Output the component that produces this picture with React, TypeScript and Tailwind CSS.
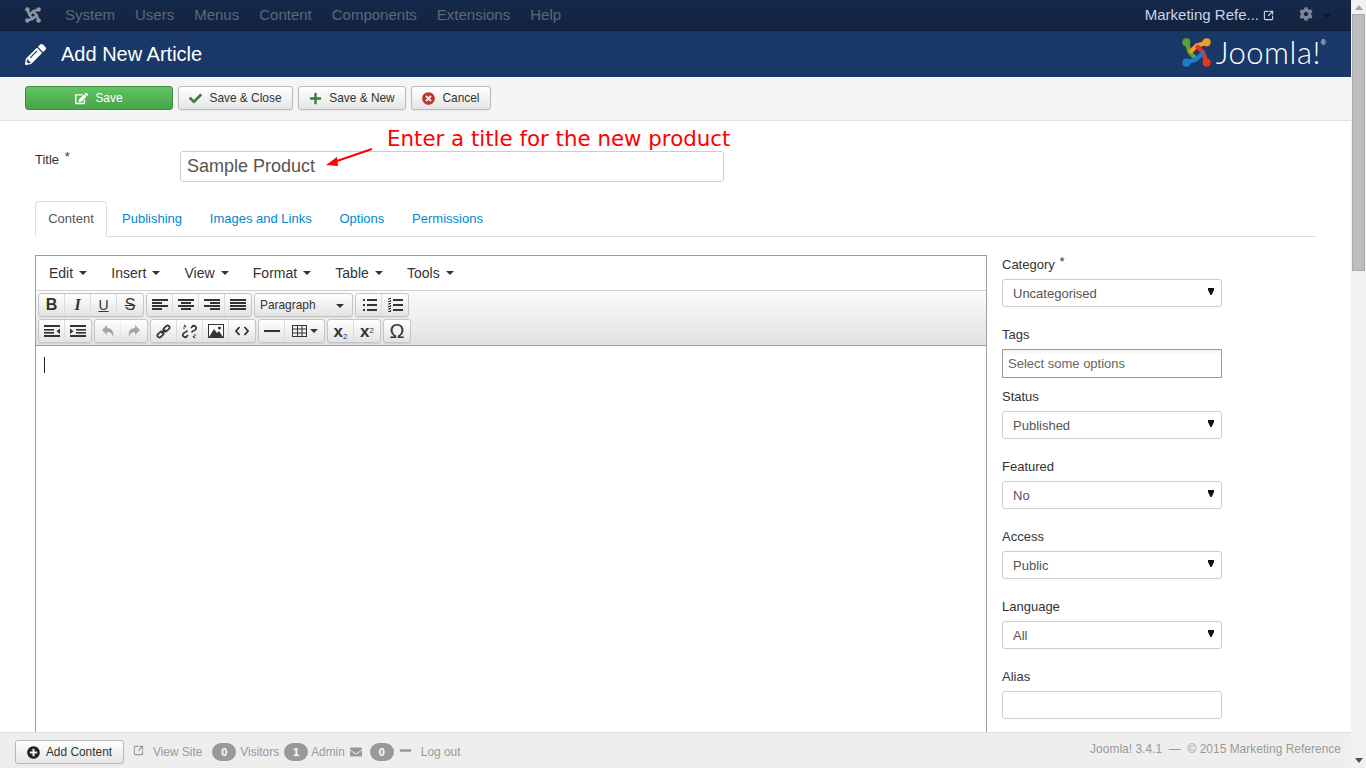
import type { ReactNode } from 'react'
import { SquareArrowOutUpRight } from 'lucide-react'
import { FaCheck, FaCog, FaEdit, FaEnvelope, FaMinus, FaPencilAlt, FaPlus, FaPlusCircle, FaTimesCircle } from 'react-icons/fa'

const font = 'font-["Liberation_Sans",Arial,sans-serif]'

const nav = ['System', 'Users', 'Menus', 'Content', 'Components', 'Extensions', 'Help']
const tabs = ['Publishing', 'Images and Links', 'Options', 'Permissions']
const menus = ['Edit', 'Insert', 'View', 'Format', 'Table', 'Tools']
const sideFields = [
  { label: 'Status', value: 'Published' },
  { label: 'Featured', value: 'No' },
  { label: 'Access', value: 'Public' },
  { label: 'Language', value: 'All' },
]

function JoomlaMark({ size = 30, mono = false }: { size?: number; mono?: boolean }) {
  const c = mono ? ['#8f96a3', '#8f96a3', '#8f96a3', '#8f96a3'] : ['#5ba42c', '#f59a23', '#e5332a', '#1c7fc4']
  return (
    <svg width={size} height={size} viewBox="0 0 30 30" fill="none" strokeWidth="4.6" strokeLinejoin="round">
      <path d="M5 5 L8 15 L15 22" stroke={c[0]} />
      <circle cx="4.5" cy="4.5" r="4.2" fill={c[0]} />
      <path d="M25 5 L15 8 L8 15" stroke={c[1]} />
      <circle cx="25.5" cy="4.5" r="4.2" fill={c[1]} />
      <path d="M25 25 L22 15 L15 8" stroke={c[2]} />
      <circle cx="25.5" cy="25.5" r="4.2" fill={c[2]} />
      <path d="M5 25 L15 22 L22 15" stroke={c[3]} />
      <circle cx="4.5" cy="25.5" r="4.2" fill={c[3]} />
    </svg>
  )
}

function ToolButton({ children, className = '' }: { children: ReactNode; className?: string }) {
  return (
    <button className={`h-6 pt-[1px] flex items-center justify-center gap-[7px] whitespace-nowrap text-[11.9px] leading-none text-[#333] rounded-[3px] border border-[#b9b9b9] bg-gradient-to-b from-white to-[#e6e6e6] shadow-[0_1px_2px_rgba(0,0,0,0.05)] ${className}`}>
      {children}
    </button>
  )
}

function Lines({ rows }: { rows: [number, number][] }) {
  return (
    <svg width="16" height="16" viewBox="0 0 16 16" fill="#333">
      {rows.map(([x, w], i) => (
        <rect key={i} x={x} y={2 + i * 3} width={w} height="2" />
      ))}
    </svg>
  )
}

function Bullets({ numbered = false }: { numbered?: boolean }) {
  return (
    <svg width="16" height="16" viewBox="0 0 16 16" fill="#333">
      {[2, 7, 12].map(y => (
        <g key={y}>
          <rect x="6" y={y} width="10" height="2" />
          {numbered ? (
            <path d={`M1.5 ${y - 1}h2.5v1h-1.5v1h1.5v2h-3v-1h2v-1h-1.5z`} />
          ) : (
            <rect x="2" y={y} width="2" height="2" />
          )}
        </g>
      ))}
    </svg>
  )
}

function Indent({ out = false }: { out?: boolean }) {
  return (
    <svg width="16" height="16" viewBox="0 0 16 16" fill="#333">
      <rect y="2" width="16" height="2" />
      <rect x={out ? 0 : 6} y="6" width="10" height="1.6" />
      <rect x={out ? 0 : 6} y="9" width="10" height="1.6" />
      <rect y="12" width="16" height="2" />
      {out ? <path d="M16 5.5V11L12.5 8.2z" /> : <path d="M0 5.5V11L3.5 8.2z" />}
    </svg>
  )
}

function Group({ children }: { children: ReactNode }) {
  return (
    <div className="flex h-6 rounded-[3px] border border-[#c5c5c5] bg-gradient-to-b from-white to-[#e3e3e3] divide-x divide-[#dcdcdc] shadow-[0_1px_1px_rgba(0,0,0,0.08)]">
      {children}
    </div>
  )
}

function Tb({ children, w = 'w-[26px]', muted = false }: { children: ReactNode; w?: string; muted?: boolean }) {
  return <div className={`${w} flex items-center justify-center text-[#333] ${muted ? 'opacity-40' : ''}`}>{children}</div>
}

function SelectBox({ value }: { value: string }) {
  return (
    <div className="h-7 w-[220px] flex items-center justify-between pl-[10px] pr-[7px] bg-white border border-[#ccc] rounded-[3px] text-[13px] text-[#555]">
      <span className="pt-[1px]">{value}</span>
      <svg width="6" height="7" viewBox="0 0 6 7" className="mb-[3px]"><path d="M0 0h6v2L3.6 7H2.4L0 2z" fill="#111" /></svg>
    </div>
  )
}

function Badge({ n }: { n: number }) {
  return <span className="w-6 h-[18px] rounded-full bg-[#999] text-white text-[11px] font-bold flex items-center justify-center">{n}</span>
}

export default function App() {
  return (
    <div className={`${font} h-screen w-full flex overflow-hidden bg-white text-[#333] text-[13px]`}>
      <div className="flex-1 min-w-0 flex flex-col">
        <nav className="h-[31px] shrink-0 bg-gradient-to-b from-[#15294b] to-[#12233f] border-b border-[#0e1c36] flex items-center pl-[25px] pr-[20px] text-[15px] text-[#5d6879]">
          <JoomlaMark size={16} mono />
          <ul className="flex gap-5 ml-[24px]">
            {nav.map(n => <li key={n}>{n}</li>)}
          </ul>
          <div className="ml-auto flex items-center text-[#c9d6e6]">
            <span>Marketing Refe...</span>
            <SquareArrowOutUpRight size={11} strokeWidth={2.4} className="ml-[4px] mt-[1px]" />
            <FaCog size={14} className="ml-[25px] -mt-[3px] text-[#7c8593]" />
            <svg width="8" height="4" viewBox="0 0 8 4" className="ml-[10px] mt-[2px]"><path d="M0 0h8L4 4z" fill="#0b1426" /></svg>
          </div>
        </nav>

        <header className="h-[46px] shrink-0 bg-[#1a3867] flex items-center pl-[25px] pr-[25px] text-white">
          <FaPencilAlt size={21} />
          <h1 className="ml-[15px] text-[20px]">Add New Article</h1>
          <div className="ml-auto flex items-center gap-[5px] -mt-[3px]">
            <JoomlaMark size={29} />
            <span className="font-['Lato',sans-serif] font-light text-[31px] leading-none tracking-[0.5px]">Joomla!</span>
            <sup className="text-[7px] -mt-3 -ml-[5px]">®</sup>
          </div>
        </header>

        <div className="h-[44px] shrink-0 bg-[#f5f5f5] border-b border-[#e1e1e1] flex items-start pl-[25px] gap-[5px] pt-[9px]">
          <button className="w-[148px] h-6 pt-[1px] flex items-center justify-center gap-[7px] text-[11.9px] text-white rounded-[3px] border border-[#3f8f3f] bg-gradient-to-b from-[#62c462] to-[#47a447]">
            <FaEdit size={13} /> Save
          </button>
          <ToolButton className="w-[115px]"><FaCheck size={13} className="text-[#378137]" />Save &amp; Close</ToolButton>
          <ToolButton className="w-[108px]"><FaPlus size={13} className="text-[#378137]" />Save &amp; New</ToolButton>
          <ToolButton className="w-[80px]"><FaTimesCircle size={13} className="text-[#bd362f]" />Cancel</ToolButton>
        </div>

        <main className="flex-1 min-h-0 overflow-hidden pl-[35px] pr-[35px] pt-[30px]">
          <div className="relative flex">
            <label className="w-[145px] leading-[18px] -mt-[3px]">Title <span className="ml-[2px] align-[3px]">*</span></label>
            <div className="w-[544px] h-[31px] flex items-center px-[6px] border border-[#ccc] rounded-[3px] text-[18px] text-[#555]">Sample Product</div>
            <span className="absolute left-[352px] -top-[25px] font-['DejaVu_Sans',sans-serif] text-[21.35px] leading-[26px] text-[#ff0000] whitespace-nowrap">Enter a title for the new product</span>
            <svg width="50" height="24" viewBox="0 0 50 24" className="absolute left-[289px] -top-[4px]">
              <path d="M48 2 L10 15" stroke="#f00" strokeWidth="2" />
              <path d="M2 18 L13 10 L14 19z" fill="#f00" />
            </svg>
          </div>

          <div className="mt-[19px] h-[36px] border-b border-[#ddd] flex items-end text-[13px]">
            <div className="h-[36px] w-[72px] -mb-[1px] flex items-center justify-center border border-[#ddd] border-b-white bg-white rounded-t-[4px] text-[#555]">Content</div>
            <div className="flex h-[35px] items-center gap-[27.8px] ml-[15px] text-[#0088cc]">
              {tabs.map(t => <span key={t}>{t}</span>)}
            </div>
          </div>

          <div className="flex mt-[18px]">
            <div className="w-[952px] h-[480px] shrink-0 border border-[#9e9e9e]">
              <div className="h-[35px] border-b border-[#d0d0d0] flex items-center pl-[13px] gap-[24.2px] text-[14px] text-[#333]">
                {menus.map(m => (
                  <span key={m} className="flex items-center gap-[6px]">
                    {m}
                    <svg width="8" height="4" viewBox="0 0 8 4"><path d="M0 0h8L4 4z" fill="#333" /></svg>
                  </span>
                ))}
              </div>
              <div className="h-[55px] border-b border-[#9e9e9e] bg-gradient-to-b from-[#fbfbfb] to-[#e2e2e2] pl-[2px] pt-[2px] flex flex-col gap-[2px]">
                <div className="flex gap-[2px]">
                  <Group>
                    <Tb><b className="text-[16px]">B</b></Tb>
                    <Tb><i className="text-[16px] font-['Liberation_Serif',serif] font-bold italic">I</i></Tb>
                    <Tb><u className="text-[14px]">U</u></Tb>
                    <Tb><s className="text-[16px]">S</s></Tb>
                  </Group>
                  <Group>
                    <Tb><Lines rows={[[0, 16], [0, 10], [0, 16], [0, 10]]} /></Tb>
                    <Tb><Lines rows={[[0, 16], [3, 10], [0, 16], [3, 10]]} /></Tb>
                    <Tb><Lines rows={[[0, 16], [6, 10], [0, 16], [6, 10]]} /></Tb>
                    <Tb><Lines rows={[[0, 16], [0, 16], [0, 16], [0, 16]]} /></Tb>
                  </Group>
                  <Group>
                    <div className="w-[97px] pt-[1px] flex items-center justify-between pl-[5px] pr-[8px] text-[11.9px]">
                      Paragraph
                      <svg width="8" height="4" viewBox="0 0 8 4"><path d="M0 0h8L4 4z" fill="#333" /></svg>
                    </div>
                  </Group>
                  <Group>
                    <Tb><Bullets /></Tb>
                    <Tb><Bullets numbered /></Tb>
                  </Group>
                </div>
                <div className="flex gap-[2px]">
                  <Group>
                    <Tb><Indent out /></Tb>
                    <Tb><Indent /></Tb>
                  </Group>
                  <Group>
                    <Tb muted><svg width="14" height="14" viewBox="0 0 14 14" fill="#333"><path d="M6 1 1 6l5 5V8c3 0 5 1 6 5 1-5-1-9-6-9z" /></svg></Tb>
                    <Tb muted><svg width="14" height="14" viewBox="0 0 14 14" fill="#333"><path d="M8 1l5 5-5 5V8c-3 0-5 1-6 5-1-5 1-9 6-9z" /></svg></Tb>
                  </Group>
                  <Group>
                    <Tb><svg width="15" height="15" viewBox="0 0 15 15" fill="none" stroke="#333" strokeWidth="1.7"><rect x="1" y="8.5" width="7" height="4" rx="2" transform="rotate(-45 4.5 10.5)" /><rect x="7" y="2.5" width="7" height="4" rx="2" transform="rotate(-45 10.5 4.5)" /><path d="M5.5 9.5l4-4" /></svg></Tb>
                    <Tb><svg width="15" height="15" viewBox="0 0 15 15" fill="none" stroke="#333" strokeWidth="1.7"><path d="M6 11l-1.5 1.5a2 2 0 0 1-3-3L3 8M9 4l1.5-1.5a2 2 0 0 1 3 3L12 7M5.5 6.5L3.5 8.5M9.5 8.5l2-2" /><path d="M2 1l2 2M1 4h2M13 14l-2-2M14 11h-2M10.5 1v2M4.5 14v-2" strokeWidth="1.2" /></svg></Tb>
                    <Tb><svg width="16" height="14" viewBox="0 0 16 14"><rect width="16" height="14" fill="#333" /><rect x="1" y="1" width="14" height="12" fill="#fff" /><path d="M1 13 6 5l3 4 2-2 4 6z" fill="#333" /><circle cx="11.5" cy="4" r="1.5" fill="#333" /></svg></Tb>
                    <Tb><svg width="14" height="10" viewBox="0 0 14 10" fill="none" stroke="#333" strokeWidth="1.8"><path d="M4.5 1 1 5l3.5 4M9.5 1 13 5 9.5 9" /></svg></Tb>
                  </Group>
                  <Group>
                    <Tb w="w-[26px]"><span className="w-4 h-[2px] bg-[#333]" /></Tb>
                    <Tb w="w-[39px]"><span className="flex items-center gap-[3px]"><svg width="15" height="12" viewBox="0 0 15 12" fill="none" stroke="#333"><rect x=".5" y=".5" width="14" height="11" /><path d="M.5 4h14M.5 8h14M5.5.5v11M10 .5v11" /></svg><svg width="8" height="4" viewBox="0 0 8 4"><path d="M0 0h8L4 4z" fill="#333" /></svg></span></Tb>
                  </Group>
                  <Group>
                    <Tb><span className="text-[17px] font-bold leading-none">x<sub className="text-[8px] font-normal">2</sub></span></Tb>
                    <Tb><span className="text-[17px] font-bold leading-none">x<sup className="text-[8px] font-normal">2</sup></span></Tb>
                  </Group>
                  <Group>
                    <Tb><span className="text-[20px] leading-none">Ω</span></Tb>
                  </Group>
                </div>
              </div>
              <div className="w-px h-4 bg-[#222] ml-[8px] mt-[11px]" />
            </div>

            <aside className="ml-[15px] w-[220px] shrink-0 -mt-[2px]">
              <div className="leading-[18px] mb-[5px]">Category <span className="ml-[1px] align-[3px]">*</span></div>
              <SelectBox value="Uncategorised" />
              <div className="leading-[18px] mt-[19px] mb-[5px]">Tags</div>
              <div className="h-[29px] flex items-center px-[5px] border border-[#999] text-[#666] bg-gradient-to-b from-[#f4f4f4] to-white to-[20%]">Select some options</div>
              {sideFields.map((f, i) => (
                <div key={f.label} className={i === 0 ? 'mt-[10px]' : 'mt-[19px]'}>
                  <div className="leading-[18px] mb-[5px]">{f.label}</div>
                  <SelectBox value={f.value} />
                </div>
              ))}
              <div className="leading-[18px] mt-[19px] mb-[5px]">Alias</div>
              <div className="h-7 border border-[#ccc] rounded-[3px]" />
            </aside>
          </div>
        </main>

        <footer className="h-[36px] shrink-0 bg-[#eeeeee] border-t border-[#ddd] flex items-center pl-[15px] pr-[10px] pt-[3px] text-[11.9px] text-[#999]">
          <ToolButton className="w-[109px] !gap-[6px]"><FaPlusCircle size={13} className="text-[#222]" />Add Content</ToolButton>
          <SquareArrowOutUpRight size={11} className="ml-[9px] -mt-[3px]" strokeWidth={2.4} />
          <span className="ml-[9px] mt-[1px]">View Site</span>
          <div className="ml-[10px]"><Badge n={0} /></div>
          <span className="ml-[4px] mt-[1px]">Visitors</span>
          <div className="ml-[5px]"><Badge n={1} /></div>
          <span className="ml-[3px] mt-[1px]">Admin</span>
          <FaEnvelope size={12} className="ml-[5px] -mt-[1px]" />
          <div className="ml-[8px]"><Badge n={0} /></div>
          <FaMinus size={13} className="ml-[5px] -mt-[3px]" />
          <span className="ml-[9px] mt-[1px]">Log out</span>
          <span className="ml-auto -mt-[4px] tracking-[0.05px]">Joomla! 3.4.1 &nbsp;—&nbsp; © 2015 Marketing Reference</span>
        </footer>
      </div>

      <div className="w-[15px] shrink-0 bg-[#f1f1f1] flex flex-col items-center">
        <svg width="8" height="5" viewBox="0 0 8 5" className="mt-[5px]"><path d="M0 5h8L4 0z" fill="#a3a3a3" /></svg>
        <div className="w-[13px] h-[257px] mt-[4px] bg-[#bdbdbd] border border-[#aaa]" />
        <svg width="8" height="5" viewBox="0 0 8 5" className="mt-auto mb-[5px]"><path d="M0 0h8L4 5z" fill="#505050" /></svg>
      </div>
    </div>
  )
}
